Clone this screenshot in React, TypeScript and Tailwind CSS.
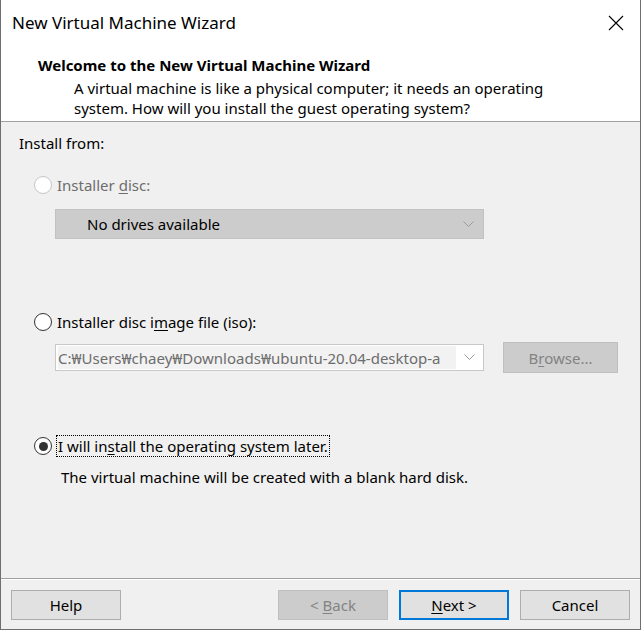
import React from "react";

const font = { fontFamily: '"Noto Sans", "Segoe UI", Arial, sans-serif' };

function Radio({ checked, disabled }: { checked?: boolean; disabled?: boolean }) {
  return (
    <span
      className={`flex h-[18px] w-[18px] shrink-0 items-center justify-center rounded-full border bg-white ${
        disabled ? "border-[#c6c6c6]" : "border-[#333333]"
      }`}
    >
      {checked && <span className="h-[9px] w-[9px] rounded-full bg-[#333333]" />}
    </span>
  );
}

function Chevron({ color }: { color: string }) {
  return (
    <svg width="11" height="7" viewBox="0 0 11 7" className="shrink-0">
      <path d="M0.5 0.5 L5.5 5.5 L10.5 0.5" fill="none" stroke={color} strokeWidth="1" />
    </svg>
  );
}

export default function App() {
  return (
    <div
      className="flex h-[630px] w-[641px] flex-col border border-t-0 border-[#6f6f6f] bg-[#f0f0f0] text-[15px] leading-[20px] text-black"
      style={font}
    >
      {/* Title bar + header */}
      <div className="bg-white">
        <div className="flex h-[46px] items-center justify-between pl-[11px] pr-[16px]">
          <span className="text-[17px] text-[#000]">New Virtual Machine Wizard</span>
          <svg width="16" height="16" viewBox="0 0 16 16">
            <path d="M1 1 L15 15 M15 1 L1 15" stroke="#000" strokeWidth="1.1" fill="none" />
          </svg>
        </div>
        <div className="h-[75px] pt-[9px]">
          <div className="mb-[3px] pl-[37px] font-bold">Welcome to the New Virtual Machine Wizard</div>
          <div className="pl-[73px] pr-[60px]">
            A virtual machine is like a physical computer; it needs an operating system. How will you install the guest operating system?
          </div>
        </div>
      </div>
      <div className="h-px bg-[#a0a0a0]" />

      {/* Content */}
      <div className="flex flex-1 flex-col pt-[11px]">
        <div className="pl-[18px]">Install from:</div>

        <div className="mt-[22px] flex items-center gap-[5px] pl-[33px] text-[#6d6d6d]">
          <Radio disabled />
          <span>
            Installer <span className="underline underline-offset-2">d</span>isc:
          </span>
        </div>

        <div className="ml-[54px] mt-[14px] flex h-[30px] w-[429px] items-center justify-between border border-[#c2c2c2] bg-[#cccccc] pl-[31px] pr-[9px]">
          <span>No drives available</span>
          <Chevron color="#9a9a9a" />
        </div>

        <div className="mt-[73px] flex items-center gap-[5px] pl-[33px]">
          <Radio />
          <span>
            Installer disc i<span className="underline underline-offset-2">m</span>age file (iso):
          </span>
        </div>

        <div className="mt-[10px] flex items-center">
          <div className="ml-[54px] flex h-[27px] w-[429px] items-center border border-[#c8c8c8] bg-white pl-[2px] pr-[8px]">
            <div className="flex h-[23px] flex-1 items-center overflow-hidden whitespace-nowrap bg-[#f2f2f2] text-[#6d6d6d]">
              C:₩Users₩chaey₩Downloads₩ubuntu-20.04-desktop-a
            </div>
            <div className="ml-[8px]">
              <Chevron color="#9a9a9a" />
            </div>
          </div>
          <div className="ml-[19px] flex h-[31px] w-[115px] items-center justify-center border border-[#bfbfbf] bg-[#cccccc] text-[#838383]">
            <span>
              B<span className="underline underline-offset-2">r</span>owse...
            </span>
          </div>
        </div>

        <div className="mt-[62px] flex items-center gap-[4px] pl-[33px]">
          <Radio checked />
          <span className="border border-dotted border-black px-px">
            I will in<span className="underline underline-offset-2">s</span>tall the operating system later.
          </span>
        </div>

        <div className="mt-[10px] pl-[60px]">The virtual machine will be created with a blank hard disk.</div>
      </div>

      {/* Footer */}
      <div className="h-px bg-[#a0a0a0]" />
      <div className="h-px bg-white" />
      <div className="flex h-[49px] items-start pt-[10px] pl-[10px] pr-[10px]">
        <button className="flex h-[30px] w-[110px] items-center justify-center border border-[#adadad] bg-[#e1e1e1]">
          Help
        </button>
        <div className="flex-1" />
        <button className="flex h-[30px] w-[110px] items-center justify-center border border-[#bfbfbf] bg-[#cccccc] text-[#838383]">
          &lt; <span className="ml-[4px] underline underline-offset-2">B</span>ack
        </button>
        <button className="ml-[11px] flex h-[30px] w-[110px] items-center justify-center border-2 border-[#0078d7] bg-[#e1e1e1]">
          <span className="underline underline-offset-2">N</span>ext &gt;
        </button>
        <button className="ml-[11px] flex h-[30px] w-[110px] items-center justify-center border border-[#adadad] bg-[#e1e1e1]">
          Cancel
        </button>
      </div>
    </div>
  );
}
